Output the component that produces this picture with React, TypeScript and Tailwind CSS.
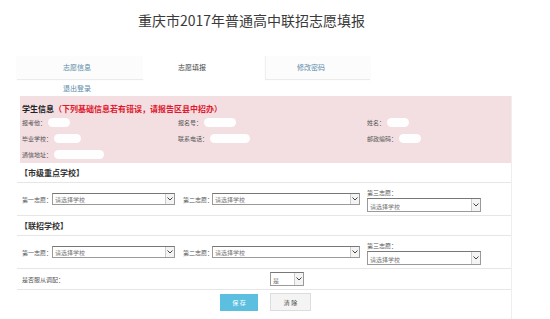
import React from 'react';

const font = { fontFamily: '"Noto Sans CJK SC", "Noto Sans", sans-serif' };

function Blob({ w }: { w: number }) {
  return <span className="inline-block h-[9px] rounded-full bg-white/95 align-middle" style={{ width: w }} />;
}

function Field({ label, blob }: { label: string; blob: number }) {
  return (
    <div className="flex items-center gap-[2px] whitespace-nowrap text-[6px] text-[#555]">
      <span>{label}</span>
      <Blob w={blob} />
    </div>
  );
}

function FakeSelect({ w, h = 12, text = '请选择学校' }: { w: number; h?: number; text?: string }) {
  return (
    <div
      className="flex shrink-0 items-stretch border border-[#9a9a9a] border-t-[#777] bg-white"
      style={{ width: w, height: h }}
    >
      <span className="flex flex-1 items-end pb-[1px] pl-[2px] text-[6px] leading-none text-[#777]">{text}</span>
      <span className="flex w-[9px] items-center justify-center border-l border-[#ccc] bg-[#f4f4f4]">
        <svg width="6" height="4" viewBox="0 0 6 4">
          <path d="M0.5 0.5 L3 3 L5.5 0.5" fill="none" stroke="#444" strokeWidth="1" />
        </svg>
      </span>
    </div>
  );
}

function ChoiceRow() {
  return (
    <div className="flex h-[33px] border-b border-[#e6e6e6]">
      <div className="flex w-[163px] items-center pl-[5px]">
        <span className="w-[30px] shrink-0 whitespace-nowrap text-[6px] text-[#555]">第一志愿：</span>
        <FakeSelect w={123} />
      </div>
      <div className="flex w-[187px] items-center pl-[3px]">
        <span className="w-[29px] shrink-0 whitespace-nowrap text-[6px] text-[#555]">第二志愿：</span>
        <FakeSelect w={148} />
      </div>
      <div className="flex flex-col justify-center pt-[2px]">
        <span className="mb-[1px] whitespace-nowrap text-[6px] text-[#555]">第三志愿：</span>
        <FakeSelect w={114} h={14} />
      </div>
    </div>
  );
}

export default function App() {
  return (
    <div className="relative h-[319px] w-[550px] overflow-hidden bg-white" style={font}>
      <h1 className="pt-[10px] pl-[138px] text-[14px] font-normal leading-[20px] text-[#3a3a3a]">
        重庆市2017年普通高中联招志愿填报
      </h1>

      <div className="mt-[26px] ml-[17px] flex h-[23px] text-[7px] text-[#5a8aa8]">
        <div className="flex w-[126px] items-center pl-[46px] bg-[#fcfcfc] shadow-[0_1px_1px_rgba(0,0,0,0.08)]">志愿信息</div>
        <div className="flex w-[122px] items-center pl-[35px] text-[#444] bg-white">志愿填报</div>
        <div className="flex w-[105px] items-center pl-[31px] bg-[#fcfcfc] border-l border-[#f0f0f0] shadow-[0_1px_1px_rgba(0,0,0,0.08)]">修改密码</div>
      </div>
      <div className="ml-[63px] mt-[2px] h-[15px] text-[7px] leading-[15px] text-[#5a8aa8]">退出登录</div>

      <div className="ml-[17px] w-[495px] border-r border-[#eeeeee] pb-[40px]">
        <div className="ml-[3px] h-[67px] bg-[#f3dfe2] pl-[2px] pt-[7px]">
          <div className="text-[8px] font-bold leading-[12px] text-[#222]">
            学生信息<span className="text-[#e0182d]">（下列基础信息若有错误，请报告区县中招办）</span>
          </div>
          <div className="mt-[3px] grid grid-cols-[156px_189px_1fr] gap-y-[7px]">
            <Field label="报考他：" blob={22} />
            <Field label="报名号：" blob={32} />
            <Field label="姓名：" blob={22} />
            <Field label="毕业学校：" blob={27} />
            <Field label="联系电话：" blob={40} />
            <Field label="邮政编码：" blob={22} />
            <Field label="通信地址：" blob={50} />
          </div>
        </div>

        <div className="flex h-[20px] items-center border-b border-[#e6e6e6] pl-[3px] text-[8px] font-bold text-[#333]">
          【市级重点学校】
        </div>
        <ChoiceRow />
        <div className="flex h-[20px] items-center border-b border-[#e6e6e6] pl-[3px] text-[8px] font-bold text-[#333]">
          【联招学校】
        </div>
        <ChoiceRow />

        <div className="flex h-[21px] items-center border-b border-[#e6e6e6] pl-[5px]">
          <span className="w-[248px] whitespace-nowrap text-[6px] text-[#555]">是否服从调配：</span>
          <FakeSelect w={34} h={14} text="是" />
        </div>

        <div className="flex h-[24px] items-center pl-[203px]">
          <button className="h-[17px] w-[38px] bg-[#5cbfe0] text-[6px] text-white">保 存</button>
          <button className="ml-[12px] h-[18px] w-[41px] border border-[#ddd] bg-[#f4f4f4] text-[6px] text-[#444]">清 除</button>
        </div>
      </div>
    </div>
  );
}
